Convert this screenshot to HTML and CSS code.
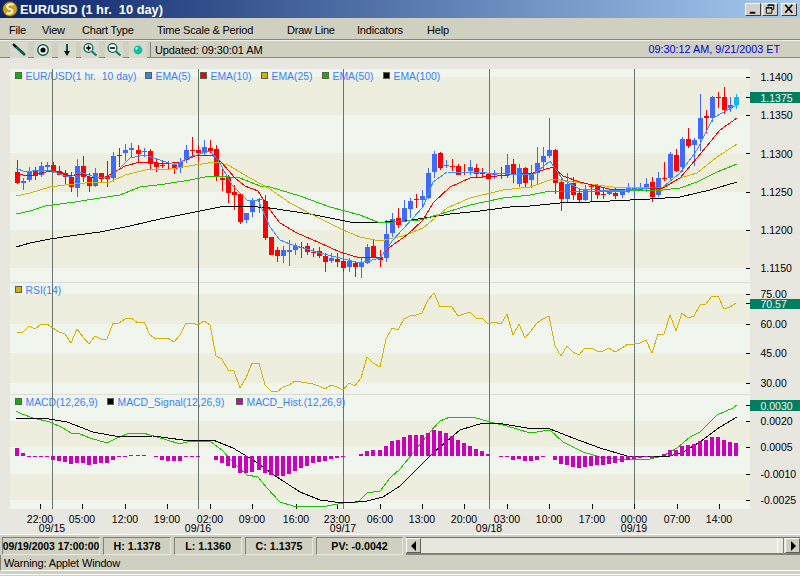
FILE: index.html
```html
<!DOCTYPE html>
<html lang="en">
<head>
    <meta charset="UTF-8">
    <title>EUR/USD (1 hr.  10 day)</title>
    <link rel="stylesheet" href="styles.css">
</head>
<body>
    <div class="window">
        <div class="title-bar">
            <svg class="app-icon" width="18" height="18" viewBox="0 0 18 18">
                <circle cx="9" cy="9" r="7.5" fill="#c9a227" stroke="#4a3a10" stroke-width="1"/>
                <path d="M12.5 4.5C9 3.5 5.5 5 6.5 7.5C7.5 10 11.5 8.5 11.5 11C11.5 13.5 8 14 5.5 13" fill="none" stroke="#fff6d0" stroke-width="2"/>
            </svg>
            <span class="title-text">EUR/USD (1 hr.  10 day)</span>
            <div class="window-buttons">
                <div class="win-btn"><svg width="15" height="12" viewBox="0 0 15 12"><rect x="4" y="9" width="6" height="2" fill="#000"/></svg></div>
                <div class="win-btn"><svg width="15" height="12" viewBox="0 0 15 12"><path d="M5.5 3.5V1.5H11.5V6.5H9.5M3.5 4.5H9.5V10.5H3.5Z" fill="none" stroke="#000"/><path d="M5 2H12M3 5H10" stroke="#000"/></svg></div>
                <div class="win-btn win-close"><svg width="15" height="12" viewBox="0 0 15 12"><path d="M3.5 1.5L11 10M11 1.5L3.5 10" stroke="#000" stroke-width="1.8"/></svg></div>
            </div>
        </div>

        <div class="menu-bar">
            <span>File</span>
            <span>View</span>
            <span>Chart Type</span>
            <span>Time Scale &amp; Period</span>
            <span>Draw Line</span>
            <span>Indicators</span>
            <span>Help</span>
        </div>

        <div class="tool-bar">
            <div class="tool-buttons">
                <div class="tool-btn">
                    <svg width="18" height="18" viewBox="0 0 18 18"><path d="M3.5 3.5L15 14" stroke="#00604c" stroke-width="2.6"/><path d="M3 3L6 6" stroke="#111" stroke-width="2"/></svg>
                </div>
                <div class="tool-btn">
                    <svg width="18" height="18" viewBox="0 0 18 18"><circle cx="9" cy="9" r="5.2" fill="#fff" stroke="#00604c" stroke-width="1.4"/><circle cx="9" cy="9" r="2.6" fill="#000"/></svg>
                </div>
                <div class="tool-btn">
                    <svg width="18" height="18" viewBox="0 0 18 18"><path d="M9 3V11" stroke="#00604c" stroke-width="2"/><path d="M6 10H12L9 15Z" fill="#111"/></svg>
                </div>
                <div class="tool-btn">
                    <svg width="18" height="18" viewBox="0 0 18 18"><circle cx="7.5" cy="7" r="4.4" fill="#fff" stroke="#00604c" stroke-width="1.3"/><path d="M5 7H10M7.5 4.5V9.5" stroke="#000" stroke-width="1.6"/><path d="M11 10.5L15.5 14.5" stroke="#00806a" stroke-width="2"/></svg>
                </div>
                <div class="tool-btn">
                    <svg width="18" height="18" viewBox="0 0 18 18"><circle cx="7.5" cy="7" r="4.4" fill="#fff" stroke="#00604c" stroke-width="1.3"/><path d="M5 7H10" stroke="#000" stroke-width="1.6"/><path d="M11 10.5L15.5 14.5" stroke="#00806a" stroke-width="2"/></svg>
                </div>
                <div class="tool-btn">
                    <svg width="18" height="18" viewBox="0 0 18 18"><circle cx="9" cy="9" r="4.4" fill="#12c0a0"/><circle cx="7.6" cy="7.4" r="1.3" fill="#a8f0e0"/></svg>
                </div>
            </div>
            <div class="tool-sep"></div>
            <span class="updated">Updated: 09:30:01 AM</span>
            <span class="clock">09:30:12 AM, 9/21/2003 ET</span>
        </div>

        <svg id="chart" class="chart" width="800" height="476" viewBox="0 58 800 476">
            <!-- price panel -->
            <rect class="band-light" x="10" y="69" width="740" height="214"/>
            <rect class="band-dark" x="10" y="77" width="740" height="38"/>
            <rect class="band-dark" x="10" y="153" width="740" height="39"/>
            <rect class="band-dark" x="10" y="230" width="740" height="38"/>
            <rect class="panel-sep" x="10" y="282" width="740" height="1"/>
            <!-- rsi panel -->
            <rect class="band-light" x="10" y="283" width="740" height="111"/>
            <rect class="band-dark" x="10" y="294" width="740" height="30"/>
            <rect class="band-dark" x="10" y="353" width="740" height="30"/>
            <rect class="panel-sep" x="10" y="394" width="740" height="1"/>
            <!-- macd panel -->
            <rect class="band-light" x="10" y="395" width="740" height="114"/>
            <rect class="band-dark" x="10" y="421" width="740" height="26"/>
            <rect class="band-dark" x="10" y="474" width="740" height="26"/>

            <g class="legend">
                <rect class="key" x="15.5" y="72.5" width="6" height="6" fill="#10b010"/>
                <text x="25.5" y="80">EUR/USD(1 hr.  10 day)</text>
                <rect class="key" x="145.5" y="72.5" width="6" height="6" fill="#3a80f0"/>
                <text x="155.5" y="80">EMA(5)</text>
                <rect class="key" x="200.5" y="72.5" width="6" height="6" fill="#f00000"/>
                <text x="210.5" y="80">EMA(10)</text>
                <rect class="key" x="261.5" y="72.5" width="6" height="6" fill="#d0b000"/>
                <text x="271.5" y="80">EMA(25)</text>
                <rect class="key" x="322.5" y="72.5" width="6" height="6" fill="#10b010"/>
                <text x="332.5" y="80">EMA(50)</text>
                <rect class="key" x="383.5" y="72.5" width="6" height="6" fill="#000"/>
                <text x="393.5" y="80">EMA(100)</text>

                <rect class="key" x="15.5" y="286.5" width="6" height="6" fill="#d0b000"/>
                <text x="25.5" y="294">RSI(14)</text>

                <rect class="key" x="15.5" y="398.5" width="6" height="6" fill="#10b010"/>
                <text x="25.5" y="406">MACD(12,26,9)</text>
                <rect class="key" x="107.5" y="398.5" width="6" height="6" fill="#000"/>
                <text x="117.5" y="406">MACD_Signal(12,26,9)</text>
                <rect class="key" x="236.5" y="398.5" width="6" height="6" fill="#d000c0"/>
                <text x="246.5" y="406">MACD_Hist.(12,26,9)</text>
            </g>

            <g id="plots"></g>

            <g class="axis">
                <text x="760.5" y="81">1.1400</text>
                <text x="760.5" y="119">1.1350</text>
                <text x="760.5" y="158">1.1300</text>
                <text x="760.5" y="196">1.1250</text>
                <text x="760.5" y="234">1.1200</text>
                <text x="760.5" y="272">1.1150</text>
                <text x="760.5" y="298">75.00</text>
                <text x="760.5" y="328">60.00</text>
                <text x="760.5" y="357">45.00</text>
                <text x="760.5" y="387">30.00</text>
                <text x="760.5" y="425">0.0020</text>
                <text x="760.5" y="451">0.0005</text>
                <text x="760.5" y="478">-0.0010</text>
                <text x="760.5" y="504">-0.0025</text>

                <rect class="badge" x="750" y="92" width="50" height="11"/>
                <text class="badge-text" x="760.5" y="102">1.1375</text>
                <rect class="badge" x="750" y="299" width="50" height="10"/>
                <text class="badge-text" x="760.5" y="308">70.57</text>
                <rect class="badge" x="750" y="400" width="50" height="11"/>
                <text class="badge-text" x="760.5" y="410">0.0030</text>
            </g>

            <g class="time-axis">
                <text x="40" y="523">22:00</text>
                <text x="82" y="523">05:00</text>
                <text x="125" y="523">12:00</text>
                <text x="167" y="523">19:00</text>
                <text x="210" y="523">02:00</text>
                <text x="252" y="523">09:00</text>
                <text x="296" y="523">16:00</text>
                <text x="337" y="523">23:00</text>
                <text x="380" y="523">06:00</text>
                <text x="422" y="523">13:00</text>
                <text x="464" y="523">20:00</text>
                <text x="507" y="523">03:00</text>
                <text x="549" y="523">10:00</text>
                <text x="592" y="523">17:00</text>
                <text x="634" y="523">00:00</text>
                <text x="677" y="523">07:00</text>
                <text x="719" y="523">14:00</text>
                <text x="52" y="532">09/15</text>
                <text x="198" y="532">09/16</text>
                <text x="343" y="532">09/17</text>
                <text x="489" y="532">09/18</text>
                <text x="634" y="532">09/19</text>
            </g>
        </svg>

        <div class="status-row">
            <div class="status-cell cell-date">09/19/2003 17:00:00</div>
            <div class="status-cell">H: 1.1378</div>
            <div class="status-cell">L: 1.1360</div>
            <div class="status-cell">C: 1.1375</div>
            <div class="status-cell cell-pv">PV: -0.0042</div>
            <div class="scrollbar">
                <div class="scroll-btn"><svg width="8" height="10" viewBox="0 0 8 10"><path d="M6 0V10L1 5Z" fill="#000"/></svg></div>
                <div class="scroll-track"></div>
                <div class="scroll-thumb"></div>
                <div class="scroll-btn"><svg width="8" height="10" viewBox="0 0 8 10"><path d="M2 0V10L7 5Z" fill="#000"/></svg></div>
            </div>
        </div>

        <div class="warning-row">Warning: Applet Window</div>
        <div class="bottom-edge"></div>
    </div>

    <script src="chart.js"></script>
</body>
</html>
```

FILE: styles.css
```css
* {
    margin: 0;
    padding: 0;
    box-sizing: border-box;
}

body {
    font-family: "Liberation Sans", Arial, sans-serif;
    background: #d0d0c0;
}

.window {
    width: 800px;
    height: 576px;
    overflow: hidden;
    display: flex;
    flex-direction: column;
    background: #d0d0c0;
    color: #000;
}

/* title bar */
.title-bar {
    height: 18px;
    display: flex;
    align-items: center;
    padding-left: 1px;
    background: linear-gradient(90deg, #0a246a 0%, #a6caf0 100%);
}

.app-icon {
    flex: none;
}

.title-text {
    margin-left: 1px;
    color: #fff;
    font-size: 12.8px;
    font-weight: bold;
    white-space: pre;
}

.window-buttons {
    margin-left: auto;
    margin-right: 3px;
    display: flex;
    gap: 1px;
}

.win-btn {
    width: 16px;
    height: 13px;
    background: #d4d0c8;
    border: 1px solid;
    border-color: #fff #404040 #404040 #fff;
    display: flex;
    align-items: center;
    justify-content: center;
}

.win-close {
    margin-left: 2px;
}

/* menu */
.menu-bar {
    height: 22px;
    display: grid;
    grid-template-columns: 33px 40px 75px 130px 70px 70px auto;
    align-items: center;
    padding: 3px 0 0 9px;
    font-size: 11px;
    letter-spacing: -0.2px;
    border-bottom: 1px solid #888880;
}

/* toolbar */
.tool-bar {
    height: 18px;
    display: flex;
    align-items: center;
    padding-top: 1px;
    border-bottom: 1px solid #888880;
    border-top: 1px solid #f0f0e8;
    font-size: 11px;
}

.tool-buttons {
    display: flex;
    gap: 5.8px;
    padding-left: 10px;
}

.tool-btn {
    width: 18px;
    height: 16px;
    display: flex;
    align-items: center;
    justify-content: center;
    background: #d8d8cc;
}

.tool-btn svg {
    flex: none;
}

.tool-sep {
    width: 1px;
    height: 15px;
    margin-left: 3px;
    background: #808078;
}

.updated {
    margin-left: 4px;
    letter-spacing: -0.1px;
}

.clock {
    margin-left: auto;
    margin-right: 20px;
    margin-top: -2px;
    color: #0000e0;
    font-size: 10.8px;
}

/* chart canvas */
.chart {
    display: block;
    flex: none;
    background: #e7e7e0;
    shape-rendering: crispEdges;
}

.band-light {
    fill: #f0f6ee;
}

.band-dark {
    fill: #eeeedf;
}

.panel-sep {
    fill: #dcdcd6;
}

.legend text {
    fill: #3a80ff;
    font-size: 10.4px;
    white-space: pre;
}

.key {
    stroke: #606050;
    stroke-width: 1;
}

.axis text,
.time-axis text {
    fill: #000;
    font-size: 10.5px;
}

.time-axis text {
    text-anchor: middle;
}

.badge {
    fill: #007f60;
}

.axis .badge-text {
    fill: #f4f4f4;
}

.v-line {
    fill: #6c746e;
}

.tick {
    fill: #000;
}

.line {
    fill: none;
    stroke-width: 1;
}

/* status row */
.status-row {
    height: 21px;
    display: flex;
    align-items: stretch;
    padding: 2px 0 0 2px;
    border-top: 1px solid #fff;
    gap: 3px;
}

.status-cell {
    width: 68px;
    height: 18px;
    display: flex;
    align-items: center;
    justify-content: center;
    font-size: 10.7px;
    font-weight: bold;
    white-space: nowrap;
    border: 1px solid;
    border-color: #808078 #e8e8e0 #e8e8e0 #808078;
}

.cell-date {
    width: 98px;
    font-size: 10.4px;
}

.cell-pv {
    width: 87px;
}

.scrollbar {
    flex: 1;
    height: 18px;
    display: flex;
    background: #e7e7e0;
    border-top: 1px solid #707068;
    border-bottom: 2px solid #808078;
}

.scroll-btn {
    width: 15px;
    background: #d0d0c0;
    border: 1px solid;
    border-color: #fff #606058 #606058 #fff;
    display: flex;
    align-items: center;
    justify-content: center;
}

.scroll-track {
    flex: 1;
}

.scroll-thumb {
    width: 7px;
    margin-right: 1px;
    background: #e7e7e0;
    border-left: 1px solid #fff;
    border-right: 1px solid #808078;
}

/* warning line */
.warning-row {
    height: 16px;
    padding: 1px 0 0 3px;
    font-size: 11px;
    letter-spacing: -0.15px;
    line-height: 15px;
    border-left: 1px solid #808078;
    border-bottom: 1px solid #fff;
}

.bottom-edge {
    flex: 1;
    border-bottom: 1px solid #fff;
    margin-bottom: 1px;
}
```

FILE: chart.js
```js
// bars are drawn in page pixels: [high, body top, body bottom, low, colour]
const R = '#ff0000', B = '#4169ff', C = '#19b5e8';

const candles = [
    [160,172,183,184,R],[178,181,183,190,B],[167,171,180,182,B],[167,171,176,180,R],[162,166,175,177,B],
    [162,165,167,172,B],[162,165,172,173,R],[166,171,175,175,R],[170,173,177,185,R],[172,177,187,192,R],
    [159,166,188,197,B],[156,166,177,182,R],[173,177,186,192,R],[168,173,186,187,B],[173,173,179,182,R],
    [161,176,179,187,R],[152,156,178,182,B],[148,155,156,167,R],[144,150,153,161,B],[143,148,150,157,B],
    [145,150,154,162,R],[148,151,152,157,B],[149,151,164,170,R],[158,163,167,172,R],[160,165,166,168,R],
    [161,163,164,170,R],[163,165,169,174,R],[158,162,168,173,B],[145,150,160,163,B],[137,150,151,156,R],
    [145,150,153,162,R],[140,147,153,155,B],[140,148,151,153,R],[145,149,176,181,R],[167,178,180,191,R],
    [175,177,193,203,R],[185,192,195,210,R],[193,194,222,224,R],[213,213,220,223,B],[198,201,212,217,B],
    [198,199,200,213,B],[195,201,238,240,R],[237,237,255,255,R],[247,250,256,262,R],[246,250,256,263,B],
    [240,250,252,266,B],[243,246,250,255,B],[242,247,248,258,R],[243,246,252,255,R],[248,252,253,257,R],
    [247,251,256,258,R],[253,256,262,272,R],[253,258,261,263,B],[253,259,262,267,R],[257,261,268,272,R],
    [258,261,267,272,B],[262,263,267,277,R],[257,263,267,278,B],[244,247,263,264,B],[239,246,257,258,R],
    [250,257,260,267,R],[220,234,258,262,B],[213,219,233,237,B],[208,218,225,228,R],[200,208,221,222,B],
    [198,201,209,218,B],[194,199,200,208,R],[190,196,200,208,B],[168,173,198,199,B],[151,154,172,178,B],
    [152,153,168,170,R],[160,165,166,168,B],[159,166,167,171,R],[164,166,175,175,R],[164,172,173,175,R],
    [160,167,171,175,B],[164,168,174,177,R],[168,173,174,177,R],[173,174,179,179,R],[170,174,175,179,B],
    [167,175,176,179,R],[154,165,175,178,B],[159,164,174,183,R],[164,168,184,187,B],[167,168,183,187,R],
    [165,173,180,188,B],[147,163,173,185,B],[147,156,162,170,B],[118,150,156,158,B],[149,150,183,194,R],
    [177,182,199,211,R],[173,184,199,202,B],[177,183,195,200,R],[188,193,200,202,R],[185,189,200,201,B],
    [185,186,187,201,R],[184,186,195,199,R],[188,194,195,199,R],[190,191,194,195,B],[188,193,196,199,R],
    [190,192,195,198,B],[183,187,191,193,B],[183,187,190,195,B],[183,187,190,190,B],[178,184,187,192,B],
    [177,182,197,202,R],[172,178,195,197,B],[162,178,179,181,R],[152,154,178,180,B],[149,155,171,172,R],
    [137,139,167,172,B],[128,139,146,148,R],[138,140,145,166,B],[94,118,139,151,B],[110,116,118,133,R],
    [96,97,118,122,B],[92,97,98,108,R],[87,97,110,114,R],[97,105,108,112,B],[94,97,105,109,C]
];

const lines = [
    ['#000000', [[16,247],[30,243],[50,239],[70,236],[100,232],[130,226],[160,219],[190,213],[210,209],[220,207],[245,206],[270,208],[290,211],[310,214],[330,218],[350,222],[365,223],[385,222],[405,221],[425,218],[450,214],[480,211],[510,207],[530,206],[560,203],[590,202],[610,201],[650,199],[680,197],[710,190],[737,182]]],
    ['#20c000', [[16,214],[30,211],[45,206],[60,204],[75,202],[100,198],[120,195],[140,187],[165,184],[190,180],[205,177],[220,176],[240,178],[260,186],[270,187],[300,196],[330,207],[360,215],[380,223],[420,220],[437,215],[470,205],[503,198],[530,195],[550,191],[570,191],[630,191],[663,190],[680,188],[697,182],[717,172],[737,164]]],
    ['#d4b400', [[16,196],[30,193],[50,187],[65,185],[85,183],[110,182],[125,175],[145,170],[170,169],[195,165],[215,162],[228,165],[250,178],[270,189],[290,203],[313,215],[343,230],[360,237],[380,241],[403,236],[423,228],[447,208],[470,198],[503,190],[530,187],[553,179],[580,183],[613,187],[663,187],[680,178],[697,173],[717,157],[737,144]]],
    ['#f00000', [[16,174],[30,176],[50,171],[60,172],[70,176],[80,174],[90,177],[105,177],[115,172],[125,166],[140,162],[150,162],[165,164],[180,162],[195,156],[212,155],[222,163],[235,178],[245,186],[258,191],[270,210],[280,223],[297,233],[320,243],[340,252],[360,258],[380,257],[390,247],[407,235],[423,220],[433,203],[450,187],[470,178],[497,176],[533,173],[553,167],[563,176],[580,182],[613,190],[663,188],[680,178],[697,158],[720,130],[737,118]]],
    ['#3a90ff', [[16,168],[25,172],[40,170],[50,170],[62,175],[70,177],[80,172],[95,177],[108,178],[118,170],[130,158],[145,155],[160,160],[175,165],[190,157],[210,151],[218,160],[232,185],[247,200],[258,200],[270,227],[280,240],[290,244],[320,253],[360,263],[380,258],[393,240],[413,218],[423,207],[433,182],[447,172],[487,173],[533,175],[550,161],[563,180],[580,189],[613,191],[663,187],[680,173],[697,150],[713,118],[737,105]]]
];

// one value per bar
const rsi = [333,332,326,329,324,324,328,332,334,343,329,337,344,336,339,339,323,323,319,318,323,322,335,339,338,338,342,335,323,323,325,321,325,356,359,370,371,388,378,363,363,385,391,392,387,385,381,382,383,384,386,389,385,387,390,383,386,378,357,363,367,339,328,330,319,316,315,313,300,293,307,306,307,316,314,312,318,318,324,322,324,314,335,324,338,331,323,319,316,346,356,346,352,355,348,348,351,351,348,352,348,344,344,343,340,353,334,334,315,331,313,318,316,305,304,296,296,309,307,303];

const macd = [[16,411],[22,414],[33,418],[50,422],[63,428],[71,433],[80,434],[90,438],[107,443],[117,438],[127,434],[143,433],[157,437],[180,444],[190,441],[210,441],[222,450],[233,462],[247,475],[258,477],[267,488],[280,502],[293,506],[327,506],[343,503],[358,502],[367,493],[380,491],[390,478],[400,469],[413,453],[430,432],[440,421],[450,417],[473,417],[490,422],[507,426],[530,433],[550,430],[563,442],[583,452],[600,457],[620,460],[650,459],[663,456],[677,448],[690,437],[700,432],[717,415],[733,408],[737,405]];

const signal = [[16,419],[43,418],[67,422],[93,432],[120,437],[153,436],[183,440],[213,440],[233,448],[253,460],[277,477],[300,492],[320,500],[343,503],[367,501],[383,497],[400,486],[413,473],[433,453],[460,430],[483,423],[503,424],[527,428],[550,429],[573,438],[600,448],[627,456],[667,457],[683,452],[700,442],[720,427],[737,417]];

// height of each histogram bar off the zero line, up is positive
const hist = [8,3,-1,-1,-1,-1,-4,-5,-6,-8,-7,-7,-9,-8,-7,-7,-4,-1,-1,1,1,1,0,-1,-4,-5,-5,-5,-1,-1,-1,0,0,-4,-7,-10,-12,-17,-17,-16,-14,-17,-19,-20,-20,-18,-15,-12,-10,-7,-6,-5,-3,-2,-1,0,0,2,5,6,6,10,15,16,19,21,21,21,23,26,25,23,20,16,13,10,7,5,2,0,-1,-1,-4,-3,-5,-5,-4,-1,0,-4,-8,-9,-11,-12,-11,-10,-9,-9,-8,-7,-6,-4,-3,-2,-1,-2,0,2,6,6,10,11,12,15,16,19,19,16,14,13];

const plots = document.getElementById('plots');
const barX = i => Math.round(16.5 + i * 6.05);

function add(tag, attrs) {
    const el = document.createElementNS('http://www.w3.org/2000/svg', tag);
    for (const k in attrs) el.setAttribute(k, attrs[k]);
    plots.appendChild(el);
    return el;
}

function rect(x, y, w, h, fill) {
    add('rect', { x, y, width: w, height: h, fill });
}

function line(color, pts) {
    add('polyline', { class: 'line', stroke: color, points: pts.map(p => p.join(',')).join(' ') });
}

// session separators
[52, 198, 343, 489, 634].forEach(x => add('rect', { class: 'v-line', x, y: 69, width: 1, height: 440 }));

// axis ticks
[77, 115, 153, 192, 230, 268, 97, 294, 324, 353, 383, 303, 405, 421, 447, 474, 500].forEach(y => {
    add('rect', { class: 'tick', x: 746, y, width: 4, height: 1 });
});
[40, 82, 125, 167, 210, 252, 296, 337, 380, 422, 464, 507, 549, 592, 634, 677, 719].forEach(x => {
    add('rect', { class: 'tick', x, y: 504, width: 1, height: 5 });
});

candles.forEach((c, i) => {
    const x = barX(i);
    rect(x, c[0], 1, c[3] - c[0], c[4]);
    rect(x - 2, c[1], 5, Math.max(c[2] - c[1], 1), c[4]);
});

lines.forEach(l => line(l[0], l[1]));

line('#d4b400', rsi.map((y, i) => [barX(i), y]));

line('#20c000', macd);
line('#000000', signal);

hist.forEach((v, i) => {
    if (v === 0) return;
    const x = barX(i) - 2;
    if (v > 0) rect(x, 456 - v, 4, v, '#cc00bb');
    else rect(x, 456, 4, -v, '#cc00bb');
});
```
